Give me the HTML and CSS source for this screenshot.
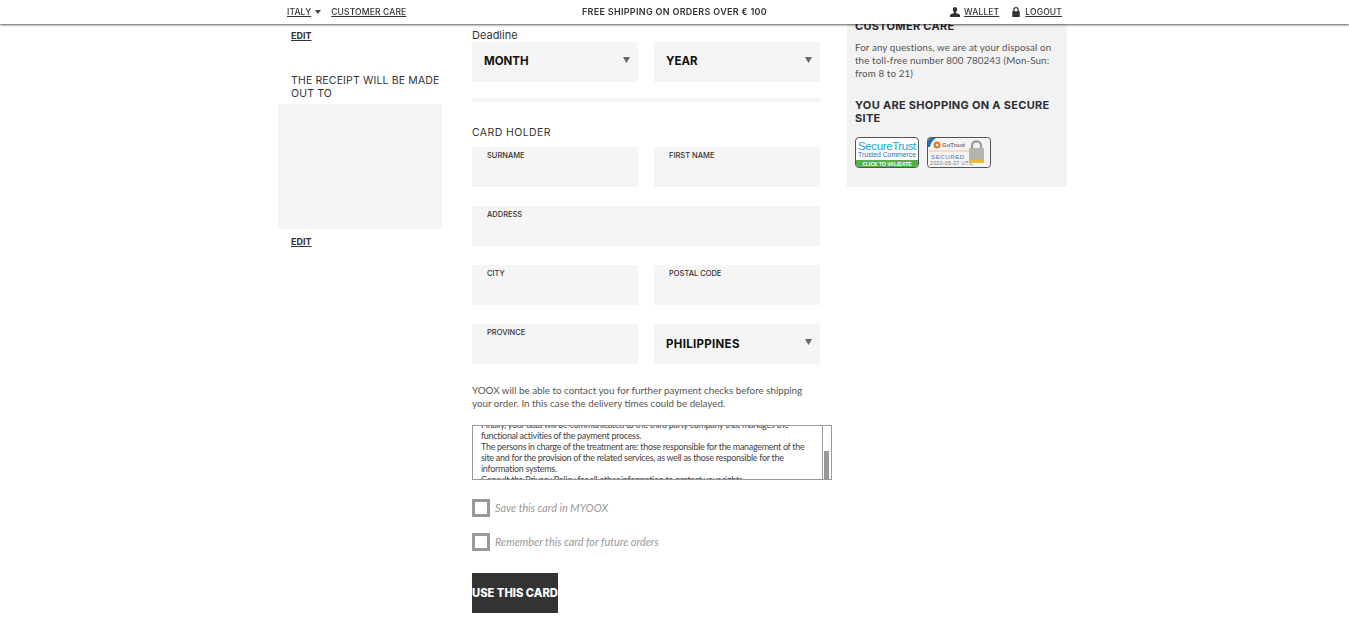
FILE: index.html
```html
<!DOCTYPE html>
<html lang="en">
<head>
  <meta charset="UTF-8">
  <title>Checkout - Payment</title>
  <link rel="stylesheet" href="styles.css">
</head>
<body>

<!-- Top bar -->
<header class="topbar">
  <div class="topbar-inner">
    <div class="topbar-left">
      <a href="#">ITALY</a>
      <span class="caret"></span>
      <a href="#" class="care-link">CUSTOMER CARE</a>
    </div>
    <div class="topbar-center">FREE SHIPPING ON ORDERS OVER € 100</div>
    <div class="topbar-right">
      <svg class="top-icon" viewBox="0 0 12 12"><path d="M6 0C4.300 0 3.400 1.200 3.400 2.900 3.400 4.300 4 5.400 4.700 6V7.200L.8 8.800C.3 9 0 9.500 0 10V12H12V10C12 9.500 11.700 9 11.200 8.800L7.300 7.200V6C8 5.400 8.600 4.300 8.600 2.900 8.600 1.200 7.700 0 6 0Z"/></svg>
      <a href="#" class="wallet-link">WALLET</a>
      <svg class="top-icon lock-icon" viewBox="0 0 12 12"><path d="M6 0C3.900 0 2.700 1.400 2.700 3.300V5H1.500V12H10.500V5H9.300V3.300C9.300 1.400 8.100 0 6 0ZM6 1.500C7.200 1.500 7.800 2.200 7.800 3.400V5H4.200V3.400C4.200 2.200 4.800 1.500 6 1.500Z"/></svg>
      <a href="#">LOGOUT</a>
    </div>
  </div>
</header>

<main class="columns">
  <!-- Addresses -->
  <section class="col-left">
    <a href="#" class="edit-link first-edit">EDIT</a>
    <h3 class="receipt-title">THE RECEIPT WILL BE MADE OUT TO</h3>
    <div class="receipt-box"></div>
    <a href="#" class="edit-link">EDIT</a>
  </section>

  <!-- Card form -->
  <section class="col-mid">
    <div class="deadline-label">Deadline</div>
    <div class="row">
      <div class="field select-field">MONTH<span class="arrow"></span></div>
      <div class="field select-field">YEAR<span class="arrow"></span></div>
    </div>
    <div class="divider"></div>
    <div class="holder-label">CARD HOLDER</div>
    <div class="row row-gap">
      <div class="field"><label>SURNAME</label></div>
      <div class="field"><label>FIRST NAME</label></div>
    </div>
    <div class="row row-gap">
      <div class="field field-wide"><label>ADDRESS</label></div>
    </div>
    <div class="row row-gap">
      <div class="field"><label>CITY</label></div>
      <div class="field"><label>POSTAL CODE</label></div>
    </div>
    <div class="row">
      <div class="field"><label>PROVINCE</label></div>
      <div class="field select-field country">PHILIPPINES<span class="arrow"></span></div>
    </div>

    <p class="notice">YOOX will be able to contact you for further payment checks before shipping your order. In this case the delivery times could be delayed.</p>

    <div class="privacy">
      <div class="privacy-text">
        <div class="privacy-inner">
          Finally, your data will be communicated to the third party company that manages the functional activities of the payment process.<br>
          The persons in charge of the treatment are: those responsible for the management of the site and for the provision of the related services, as well as those responsible for the information systems.<br>
          Consult the Privacy Policy for all other information to protect your rights.
        </div>
      </div>
      <div class="privacy-scroll"><div class="privacy-thumb"></div></div>
    </div>

    <div class="check-row"><span class="checkbox"></span><span class="check-text">Save this card in MYOOX</span></div>
    <div class="check-row"><span class="checkbox"></span><span class="check-text">Remember this card for future orders</span></div>

    <button class="use-card" type="button">USE THIS CARD</button>
  </section>

  <!-- Side panel -->
  <aside class="col-right">
    <h4 class="side-title">CUSTOMER CARE</h4>
    <p class="side-text">For any questions, we are at your disposal on the toll-free number 800 780243 (Mon-Sun: from 8 to 21)</p>
    <h4 class="side-title secure-title">YOU ARE SHOPPING ON A SECURE SITE</h4>
    <div class="badges">
      <svg class="badge" viewBox="0 0 64 31">
        <rect x=".5" y=".5" width="63" height="30" rx="3.500" fill="#fff" stroke="#555"/>
        <path d="M1 23H63V27A3 3 0 0 1 60 30H4A3 3 0 0 1 1 27Z" fill="#55b145"/>
        <text x="32" y="13" class="st-name">SecureTrust</text>
        <text x="32" y="20" class="st-sub">Trusted Commerce</text>
        <text x="32" y="28.500" class="st-cta">CLICK TO VALIDATE</text>
      </svg>
      <svg class="badge" viewBox="0 0 64 31">
        <rect x=".5" y=".5" width="63" height="30" rx="3" fill="#f4f4f4" stroke="#555"/>
        <path d="M1 4A3 3 0 0 1 4 1H9C6 3 4 5 3 10H1Z" fill="#2f6ea8"/>
        <circle cx="10" cy="8" r="3.500" fill="#e8742a"/>
        <circle cx="10" cy="8" r="1.300" fill="#fff"/>
        <text x="15" y="10" class="gt-name">GoTrust</text>
        <path d="M2 14H42" stroke="#e9a35c" stroke-width=".6"/>
        <text x="4" y="22" class="gt-sec">SECURED</text>
        <text x="3" y="28" class="gt-date">2020-05-27 UTC</text>
        <path d="M45 11V8.500C45 3 54 3 54 8.500V11" fill="none" stroke="#9a9a9a" stroke-width="2.200"/>
        <rect x="42" y="11" width="15" height="15" rx="1" fill="#b4b4ac"/>
        <rect x="42" y="23" width="15" height="3" fill="#eab93c"/>
      </svg>
    </div>
  </aside>
</main>

</body>
</html>
```

FILE: styles.css
```css
body {
  margin: 0;
  padding: 0;
  background-color: #fff;
  font-family: "Lato", Arial, sans-serif;
  color: #333;
  height: 623px;
  overflow: hidden;
}

a {
  color: #333;
}

/* top bar */
.topbar {
  position: fixed;
  top: 0;
  left: 0;
  right: 0;
  z-index: 10;
  height: 24px;
  background-color: #fff;
  box-shadow: 0 1px 2px rgba(0, 0, 0, 0.65);
  font-family: "Inter", Arial, sans-serif;
  font-size: 8.500px;
  font-weight: 500;
  letter-spacing: 0.15px;
}

.topbar-inner {
  width: 775px;
  height: 23px;
  margin-left: 287px;
  display: flex;
  align-items: center;
}

.topbar-left,
.topbar-right {
  flex: 1;
  display: flex;
  align-items: center;
}

.topbar-right {
  justify-content: flex-end;
}

.caret {
  width: 0;
  height: 0;
  margin: 0 10px 0 4px;
  border-left: 3px solid transparent;
  border-right: 3px solid transparent;
  border-top: 4px solid #444;
}

.topbar-center {
  font-weight: 600;
  font-size: 9px;
  letter-spacing: 0.3px;
}

.top-icon {
  width: 10px;
  height: 10px;
  fill: #333;
  margin-right: 4px;
}

.lock-icon {
  margin-left: 12px;
  margin-right: 4px;
}

/* columns */
.columns {
  display: flex;
  align-items: flex-start;
  margin-left: 278px;
}

.col-left {
  width: 164px;
  padding-top: 30px;
  margin-right: 30px;
}

.col-mid {
  width: 348px;
  padding-top: 28px;
  margin-right: 27px;
}

.col-right {
  width: 204px;
  height: 167px;
  margin-top: 20px;
  padding: 0 8px;
  background-color: #f2f2f2;
}

/* left */
.edit-link {
  display: block;
  margin-left: 13px;
  font-family: "Inter", Arial, sans-serif;
  font-size: 9px;
  font-weight: 700;
  line-height: 12px;
}

.receipt-title {
  margin: 32px 0 0 13px;
  font-family: "Inter", Arial, sans-serif;
  font-size: 10.500px;
  font-weight: 400;
  letter-spacing: 0.15px;
  line-height: 13px;
  width: 151px;
}

.receipt-box {
  height: 125px;
  margin: 4px 0 7px;
  background-color: #f5f5f5;
}

/* form */
.deadline-label {
  font-family: "Inter", Arial, sans-serif;
  font-size: 11px;
  line-height: 14px;
}

.row {
  display: flex;
  gap: 16px;
}

.row-gap {
  margin-bottom: 19px;
}

.field {
  position: relative;
  box-sizing: border-box;
  width: 166px;
  height: 40px;
  background-color: #f5f5f5;
}

.field-wide {
  width: 348px;
}

.field label {
  display: block;
  padding: 4px 0 0 15px;
  font-family: "Inter", Arial, sans-serif;
  font-size: 7.500px;
  font-weight: 500;
  line-height: 9px;
}

.select-field {
  padding-left: 12px;
  font-family: "Inter", Arial, sans-serif;
  font-size: 11.500px;
  font-weight: 700;
  line-height: 38px;
  color: #111;
}

.country {
  line-height: 40px;
  letter-spacing: 0.3px;
}

.arrow {
  position: absolute;
  top: 15px;
  right: 8px;
  width: 7px;
  height: 6px;
  background-color: #666;
  clip-path: polygon(0 0, 100% 0, 50% 100%);
}

.divider {
  height: 4px;
  margin-top: 16px;
  background-color: #f5f5f5;
}

.holder-label {
  margin-top: 24px;
  margin-bottom: 7px;
  font-family: "Inter", Arial, sans-serif;
  font-size: 10.500px;
  letter-spacing: 0.4px;
  line-height: 14px;
}

.notice {
  width: 340px;
  margin: 20px 0 15px;
  font-size: 9.800px;
  line-height: 13px;
  color: #555;
}

.privacy {
  display: flex;
  box-sizing: border-box;
  width: 360px;
  height: 55px;
  border: 1px solid #999;
}

.privacy-text {
  flex: 1;
  overflow: hidden;
  padding: 0 8px;
}

.privacy-inner {
  margin-top: -7px;
  font-size: 9px;
  letter-spacing: -0.3px;
  line-height: 11px;
  color: #444;
}

.privacy-scroll {
  display: flex;
  align-items: flex-end;
  box-sizing: border-box;
  width: 9px;
  border-left: 1px solid #999;
  padding: 0 2px 0 1px;
}

.privacy-thumb {
  width: 5px;
  height: 28px;
  background-color: #999;
}

.check-row {
  display: flex;
  align-items: center;
  gap: 5px;
  height: 18px;
  margin-top: 19px;
  font-size: 10.800px;
  font-style: italic;
  color: #999;
}

.check-row + .check-row {
  margin-top: 16px;
}

.check-text {
  margin-bottom: 2px;
}

.checkbox {
  box-sizing: border-box;
  width: 18px;
  height: 18px;
  border: 3px solid #999;
}

.use-card {
  display: block;
  width: 86px;
  height: 40px;
  margin-top: 22px;
  padding: 0;
  border: none;
  background-color: #333;
  color: #fff;
  font-family: "Inter", Arial, sans-serif;
  font-size: 11.200px;
  font-weight: 800;
  white-space: nowrap;
}

/* side panel */
.side-title {
  margin: 0;
  font-family: "Inter", Arial, sans-serif;
  font-size: 11px;
  font-weight: 700;
  letter-spacing: 0.3px;
  line-height: 13px;
  color: #2c2c34;
}

.side-text {
  margin: 8px 0 0;
  font-size: 9.800px;
  letter-spacing: 0.1px;
  line-height: 13px;
  color: #555;
}

.secure-title {
  margin-top: 19px;
}

.badges {
  display: flex;
  gap: 8px;
  margin-top: 12px;
}

.badge {
  width: 64px;
  height: 31px;
  font-family: "Liberation Sans", Arial, sans-serif;
}

.st-name {
  font-size: 11.500px;
  letter-spacing: -0.4px;
  fill: #1aa3d4;
  text-anchor: middle;
}

.st-sub {
  font-size: 6.800px;
  fill: #2a6fae;
  text-anchor: middle;
}

.st-cta {
  font-size: 5px;
  font-weight: 700;
  fill: #fff;
  text-anchor: middle;
}

.gt-name {
  font-size: 6px;
  font-weight: 700;
  fill: #777;
}

.gt-sec {
  font-size: 6.200px;
  letter-spacing: 0.5px;
  fill: #4d7db0;
}

.gt-date {
  font-size: 5.200px;
  letter-spacing: 0.3px;
  fill: #777;
}
```
